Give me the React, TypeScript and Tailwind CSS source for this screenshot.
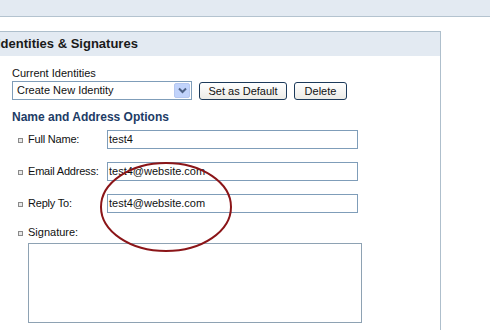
import React from "react";

const font = { fontFamily: '"Liberation Sans", Arial, sans-serif' };

function Bullet() {
  return <span className="inline-block w-[5px] h-[5px] border border-[#8a8a8a] bg-[#e8e8e8] mr-[5px] mt-[1px] shrink-0" />;
}

function Row({ label, value }: { label: string; value: string }) {
  return (
    <div className="flex items-center h-[19px]">
      <div className="flex items-center w-[95px] pl-[6px] text-[11px] text-[#111] tracking-[-0.2px]">
        <Bullet />
        <span>{label}</span>
      </div>
      <div className="w-[251px] h-[19px] border border-[#7f9db9] bg-white flex items-center pl-[1px] text-[11px] text-[#111]">
        {value}
      </div>
    </div>
  );
}

export default function App() {
  return (
    <div className="relative w-[490px] h-[330px] overflow-hidden bg-white" style={font}>
      <div className="h-[17px] bg-[#e3eaf2] border-b border-[#b4c3cf]" />
      <div className="mt-[14px] ml-[-10px] w-[451px] h-[300px] border border-[#aebfcc] border-l-0">
        <div className="h-[24px] bg-[#e3eaf2] flex items-center pl-[7px] text-[13px] font-bold text-[#1a1a1a]">
          Identities &amp; Signatures
        </div>
        <div className="pl-[22px] pt-[11px]">
          <div className="text-[11px] text-[#111] leading-[13px]">Current Identities</div>
          <div className="flex items-center mt-[1px] gap-[7px]">
            <div className="w-[180px] h-[19px] border border-[#7f9db9] bg-white flex items-center justify-between pl-[4px] pr-[1px] text-[11px] text-[#111]">
              <span>Create New Identity</span>
              <span className="w-[16px] h-[15px] bg-[#c1d3fb] border border-[#b6c8f0] rounded-[2px] flex items-center justify-center">
                <svg width="9" height="7" viewBox="0 0 9 7">
                  <path d="M1 1.5 L4.5 5 L8 1.5" fill="none" stroke="#4d6185" strokeWidth="2" />
                </svg>
              </span>
            </div>
            <button className="h-[18px] w-[88px] border border-[#1c3a5a] rounded-[3px] bg-gradient-to-b from-white to-[#ecebe6] text-[11px] text-[#111]">
              Set as Default
            </button>
            <button className="h-[18px] w-[53px] border border-[#1c3a5a] rounded-[3px] bg-gradient-to-b from-white to-[#ecebe6] text-[11px] text-[#111]">
              Delete
            </button>
          </div>
          <div className="mt-[10px] text-[12px] font-bold text-[#1d3c66] leading-[14px]">Name and Address Options</div>
          <div className="mt-[6px] flex flex-col gap-[13px]">
            <Row label="Full Name:" value="test4" />
            <Row label="Email Address:" value="test4@website.com" />
            <Row label="Reply To:" value="test4@website.com" />
          </div>
          <div className="mt-[13px] flex items-center pl-[6px] text-[11px] text-[#111] h-[13px]">
            <Bullet />
            <span>Signature:</span>
          </div>
          <div className="mt-[4px] ml-[16px] w-[334px] h-[80px] border border-[#8ea2b3] bg-white" />
        </div>
      </div>
      <svg className="absolute left-0 top-0 pointer-events-none" width="490" height="330">
        <ellipse cx="166" cy="207" rx="65" ry="44" fill="none" stroke="#8b1518" strokeWidth="2" />
      </svg>
    </div>
  );
}
